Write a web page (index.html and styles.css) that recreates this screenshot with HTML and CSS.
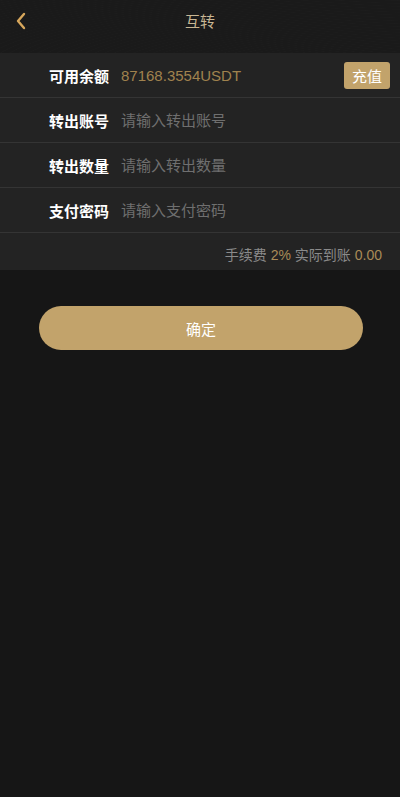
FILE: index.html
```html
<!DOCTYPE html>
<html lang="zh-CN">
<head>
    <meta charset="UTF-8">
    <meta name="viewport" content="width=device-width, initial-scale=1.0">
    <title>互转</title>
    <link rel="stylesheet" href="styles.css">
</head>
<body>

    <!-- Top bar -->
    <div class="top-bar">
        <a class="back-btn" href="#">
            <svg width="10" height="18" viewBox="0 0 10 18">
                <polyline points="8,2 2,9 8,16" fill="none" stroke="#d7a75c" stroke-width="2.4" stroke-linecap="round" stroke-linejoin="round"/>
            </svg>
        </a>
        <h1 class="title">互转</h1>
    </div>

    <div class="form-section">
        <div class="form-row">
            <span class="label">可用余额</span>
            <span class="balance">87168.3554USDT</span>
            <button class="recharge-btn">充值</button>
        </div>
        <div class="form-row">
            <span class="label">转出账号</span>
            <input class="field" type="text" placeholder="请输入转出账号">
        </div>
        <div class="form-row">
            <span class="label">转出数量</span>
            <input class="field" type="text" placeholder="请输入转出数量">
        </div>
        <div class="form-row">
            <span class="label">支付密码</span>
            <input class="field" type="password" placeholder="请输入支付密码">
        </div>
        <div class="fee-row">
            手续费 <span class="gold">2%</span> 实际到账 <span class="gold">0.00</span>
        </div>
    </div>

    <div class="submit-wrap">
        <button class="submit-btn">确定</button>
    </div>

</body>
</html>
```

FILE: styles.css
```css
body {
    margin: 0;
    padding: 0;
    background: #161616;
    font-family: 'Liberation Sans', 'Noto Sans CJK SC', sans-serif;
    color: #fff;
}

.top-bar {
    height: 53px;
    display: flex;
    align-items: center;
    justify-content: center;
    position: relative;
    background-color: #1a1a1a;
    background-image: repeating-radial-gradient(ellipse at 110% 140%, rgba(255, 255, 255, 0) 0, rgba(255, 255, 255, 0) 6px, rgba(255, 255, 255, 0.012) 7px, rgba(255, 255, 255, 0) 9px);
}

.back-btn {
    position: absolute;
    left: 16px;
    top: 12px;
    display: block;
    line-height: 0;
}

.title {
    margin: 0;
    font-size: 15px;
    font-weight: normal;
    color: #c8b693;
    padding-bottom: 12px;
}

.form-section {
    background: #232323;
}

.form-row {
    height: 44px;
    border-bottom: 1px solid #343434;
    display: flex;
    align-items: center;
    padding: 0 10px 0 49px;
}

.label {
    width: 72px;
    flex-shrink: 0;
    font-size: 15px;
    font-weight: bold;
    color: #fff;
}

.balance {
    flex: 1;
    font-size: 15px;
    color: #a0824e;
}

.recharge-btn {
    background: #c2a36b;
    color: #fff;
    border: none;
    border-radius: 3px;
    width: 46px;
    height: 27px;
    padding: 0;
    font-size: 15px;
    font-family: inherit;
}

.field {
    flex: 1;
    background: transparent;
    border: none;
    outline: none;
    padding: 0;
    font-size: 15px;
    font-family: inherit;
    color: #ddd;
}

.field::placeholder {
    color: #6f6f6f;
}

.fee-row {
    height: 30px;
    line-height: 30px;
    padding: 7px 18px 0 0;
    text-align: right;
    font-size: 14px;
    color: #8a8a8a;
}

.gold {
    color: #a98b57;
}

.submit-wrap {
    padding: 36px 37px 0 39px;
}

.submit-btn {
    width: 100%;
    height: 44px;
    border: none;
    border-radius: 22px;
    background: #c2a36b;
    color: #fff;
    font-size: 15px;
    font-family: inherit;
}
```
